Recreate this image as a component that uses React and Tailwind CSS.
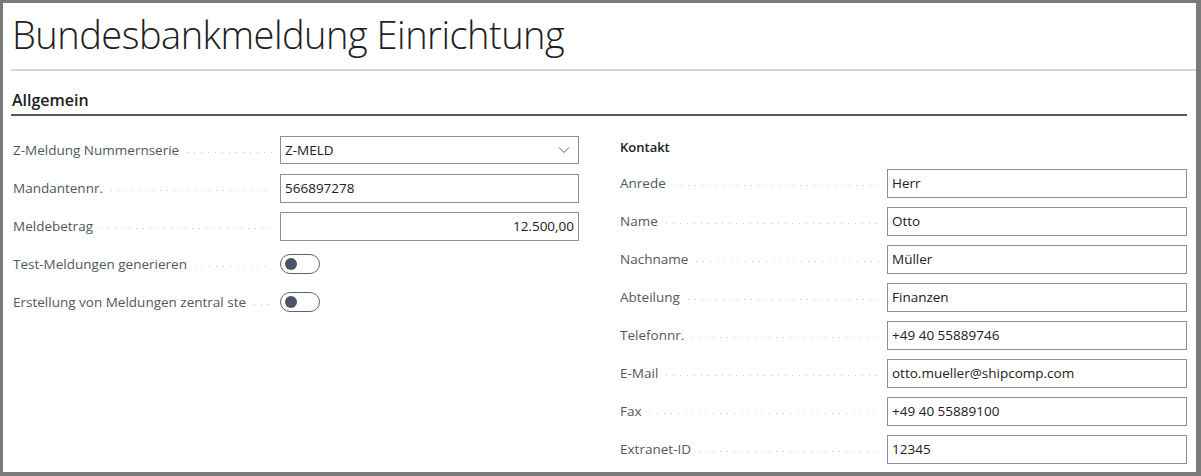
import React from 'react';

const FONT = { fontFamily: '"Open Sans", "Noto Sans", sans-serif' };

// dotted leader between label and value
function Leader() {
  return (
    <div className="mt-[5px] h-px flex-1 bg-[linear-gradient(to_right,#c6c6c6_1px,transparent_1px)] bg-[length:7px_1px] bg-repeat-x" />
  );
}

function Label({ children }) {
  return (
    <span className="whitespace-nowrap pr-[8px] text-[13.5px] text-[#4f5862]">
      {children}
    </span>
  );
}

function Field({ label, value, right }) {
  return (
    <div className="flex h-[38px] items-center">
      <div className="flex w-[267px] items-center pr-[8px]">
        <Label>{label}</Label>
        <Leader />
      </div>
      <div
        className={`flex h-[29px] flex-1 items-center border border-[#8a9096] px-[4px] text-[13.5px] text-[#212121] ${
          right ? 'justify-end' : ''
        }`}
      >
        {value}
      </div>
    </div>
  );
}

function SelectField({ label, value }) {
  return (
    <div className="flex h-[38px] items-center">
      <div className="flex w-[267px] items-center pr-[8px]">
        <Label>{label}</Label>
        <Leader />
      </div>
      <div className="flex h-[28px] flex-1 items-center justify-between border border-[#8a9096] pl-[4px] pr-[8px] text-[13.5px] text-[#212121]">
        <span>{value}</span>
        <svg width="12" height="8" viewBox="0 0 12 8" fill="none">
          <path d="M1 1.5 L6 6.5 L11 1.5" stroke="#505a6b" strokeWidth="1" />
        </svg>
      </div>
    </div>
  );
}

function ToggleField({ label }) {
  return (
    <div className="flex h-[38px] items-center">
      <div className="flex w-[267px] items-center pr-[8px]">
        <Label>{label}</Label>
        <Leader />
      </div>
      <div className="flex h-[20px] w-[40px] items-center rounded-full border border-[#5d6572] px-[4px]">
        <div className="h-[12px] w-[12px] rounded-full bg-[#4b5467]" />
      </div>
    </div>
  );
}

export default function App() {
  const contact = [
    ['Anrede', 'Herr'],
    ['Name', 'Otto'],
    ['Nachname', 'Müller'],
    ['Abteilung', 'Finanzen'],
    ['Telefonnr.', '+49 40 55889746'],
    ['E-Mail', 'otto.mueller@shipcomp.com'],
    ['Fax', '+49 40 55889100'],
    ['Extranet-ID', '12345'],
  ];

  return (
    <div style={FONT} className="h-[476px] w-[1201px] bg-[#7a7a7a] pb-[4px] pl-[3px] pr-[5px] pt-[3px]">
      <div className="h-full overflow-hidden bg-white">
        <div className="flex h-[66px] items-center pl-[9px] pb-[4px]">
          <h1 className="text-[38px] font-light leading-none tracking-[-0.5px] text-[#212121]">
            Bundesbankmeldung Einrichtung
          </h1>
        </div>
        <div className="ml-[8px] h-[2px] bg-[#d1d6da]" />

        <div className="ml-[8px] mr-[9px]">
          <div className="flex h-[43px] items-end pb-[6px] pl-px">
            <h2 className="text-[16px] font-semibold leading-none text-[#212121]">Allgemein</h2>
          </div>
          <div className="h-[2px] bg-[#505a6b]" />

          <div className="flex gap-[41px] pl-[2px] pt-[15px]">
            <div className="w-[566px]">
              <SelectField label="Z-Meldung Nummernserie" value="Z-MELD" />
              <Field label="Mandantennr." value="566897278" />
              <Field label="Meldebetrag" value="12.500,00" right />
              <ToggleField label="Test-Meldungen generieren" />
              <ToggleField label="Erstellung von Meldungen zentral ste" />
            </div>

            <div className="flex-1">
              <div className="flex h-[33px] items-center">
                <span className="text-[13px] font-semibold text-[#212121]">Kontakt</span>
              </div>
              {contact.map(([label, value]) => (
                <Field key={label} label={label} value={value} />
              ))}
            </div>
          </div>
        </div>
      </div>
    </div>
  );
}
